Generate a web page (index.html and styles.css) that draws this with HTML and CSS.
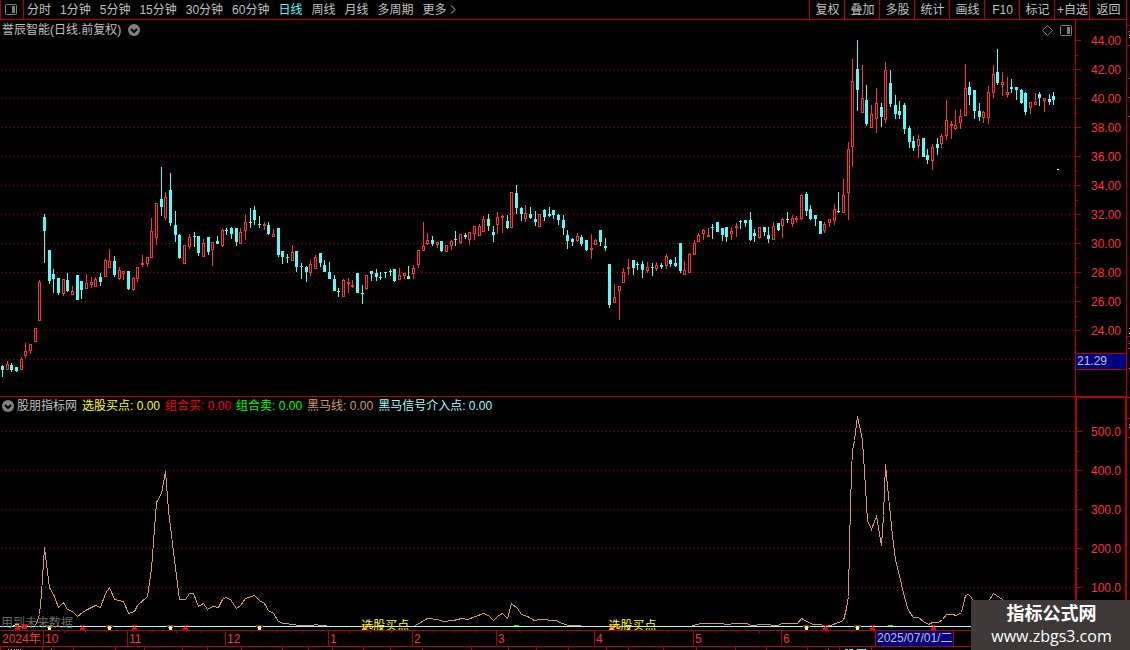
FILE: index.html
```html
<!DOCTYPE html>
<html lang="zh-CN">
<head>
  <meta charset="UTF-8">
  <meta name="viewport" content="width=device-width, initial-scale=1.0">
  <title>誉辰智能 - 日线</title>
  <link rel="stylesheet" href="styles.css">
</head>
<body>
  <div class="app">
    <div class="workspace">
      <header class="toolbar">
        <button type="button" class="panel-btn" aria-label="侧栏">
          <svg class="panel-icon" width="12" height="11" viewBox="0 0 12 11"><rect x="0.5" y="0.5" width="11" height="10" rx="1"/><rect class="fill" x="7" y="2" width="3" height="7"/></svg>
        </button>
        <nav class="periods">
          <button type="button">分时</button>
          <button type="button">1分钟</button>
          <button type="button">5分钟</button>
          <button type="button">15分钟</button>
          <button type="button">30分钟</button>
          <button type="button">60分钟</button>
          <button type="button" class="active">日线</button>
          <button type="button">周线</button>
          <button type="button">月线</button>
          <button type="button">多周期</button>
          <button type="button" class="more">更多<svg width="6" height="9" viewBox="0 0 6 9"><path d="M1 0.5L5 4.5L1 8.5"/></svg></button>
        </nav>
        <nav class="tools">
          <button type="button">复权</button>
          <button type="button">叠加</button>
          <button type="button">多股</button>
          <button type="button">统计</button>
          <button type="button">画线</button>
          <button type="button">F10</button>
          <button type="button">标记</button>
          <button type="button">+自选</button>
          <button type="button">返回</button>
        </nav>
      </header>

      <section class="pane price-pane">
        <div class="plot">
          <div class="pane-title">
            <span>誉辰智能(日线.前复权)</span>
            <button type="button" class="round-btn" aria-label="展开"><svg width="12" height="12" viewBox="0 0 12 12"><circle cx="6" cy="6" r="6"/><path d="M3 5L6 8L9 5"/></svg></button>
            <div class="pane-tools">
              <svg class="diamond" width="11" height="11" viewBox="0 0 11 11"><path d="M5.5 0.5L10.5 5.5L5.5 10.5L0.5 5.5Z"/></svg>
              <svg class="panel-icon" width="12" height="11" viewBox="0 0 12 11"><rect x="0.5" y="0.5" width="11" height="10" rx="1"/><rect class="fill" x="7" y="2" width="3" height="7"/></svg>
            </div>
          </div>
          <svg id="candles" class="candles" viewBox="0 40 1075 356" preserveAspectRatio="none"></svg>
        </div>
        <div class="axis">
          <span>44.00</span>
          <span>42.00</span>
          <span>40.00</span>
          <span>38.00</span>
          <span>36.00</span>
          <span>34.00</span>
          <span>32.00</span>
          <span>30.00</span>
          <span>28.00</span>
          <span>26.00</span>
          <span>24.00</span>
          <div class="price-tag">21.29</div>
        </div>
      </section>

      <section class="pane signal-pane">
        <div class="plot">
          <div class="pane-title legend">
            <button type="button" class="round-btn" aria-label="展开"><svg width="12" height="12" viewBox="0 0 12 12"><circle cx="6" cy="6" r="6"/><path d="M3 5L6 8L9 5"/></svg></button>
            <span>股朋指标网</span>
            <span class="yellow">选股买点: 0.00</span>
            <span class="red">组合买: 0.00</span>
            <span class="green">组合卖: 0.00</span>
            <span class="tan">黑马线: 0.00</span>
            <span class="aqua">黑马信号介入点: 0.00</span>
          </div>
          <svg id="signal" class="signal" viewBox="0 414 1075 216" preserveAspectRatio="none"></svg>
          <span class="note">用到未来数据</span>
          <span class="mark mark-jan">选股买点</span>
          <span class="mark mark-apr">选股买点</span>
        </div>
        <div class="axis">
          <span>500.0</span>
          <span>400.0</span>
          <span>300.0</span>
          <span>200.0</span>
          <span>100.0</span>
        </div>
      </section>

      <div class="dates">
        <span class="year">2024年</span>
        <span>10</span>
        <span>11</span>
        <span>12</span>
        <span>1</span>
        <span>2</span>
        <span>3</span>
        <span>4</span>
        <span>5</span>
        <span>6</span>
        <span class="current">2025/07/01/二</span>
        <span></span>
      </div>
      <svg id="footTicks" class="foot-ticks" viewBox="0 647 1126 3" preserveAspectRatio="none"></svg>
    </div>
    <svg id="edge" class="edge" viewBox="0 0 3 650" preserveAspectRatio="none"></svg>

    <div class="watermark">
      <strong>指标公式网</strong>
      <span>www.zbgs3.com</span>
    </div>
  </div>
  <script src="chart.js"></script>
</body>
</html>
```

FILE: styles.css
```css
* {
  box-sizing: border-box;
}

body {
  margin: 0;
  background: #000;
  color: #c0c0c0;
  font-family: "Liberation Sans", "Noto Sans CJK SC", sans-serif;
  font-size: 12px;
  line-height: 18px;
}

button {
  margin: 0;
  padding: 0;
  border: 0;
  background: none;
  color: inherit;
  font: inherit;
  white-space: nowrap;
  cursor: pointer;
}

svg {
  display: block;
}

.app {
  position: relative;
  display: flex;
  overflow: hidden;
}

.workspace {
  flex: 1;
  min-width: 0;
}

/* Toolbar */
.toolbar {
  display: flex;
  height: 20px;
  border-bottom: 1px solid #b40000;
}

.panel-btn {
  width: 24px;
  padding-left: 4px;
  border-left: 1px solid #b40000;
  border-right: 1px solid #b40000;
}

.panel-icon rect {
  fill: none;
  stroke: #808080;
}

.panel-icon .fill {
  fill: #808080;
  stroke: none;
}

.periods {
  display: flex;
  gap: 9px;
  padding-left: 3px;
}

.periods .active {
  color: #54fcfc;
}

.more {
  display: flex;
  align-items: center;
  gap: 3px;
}

.more path {
  fill: none;
  stroke: #c0c0c0;
}

.tools {
  display: flex;
  margin-left: auto;
}

.tools button {
  width: 35px;
  padding-left: 1px;
  border-left: 1px solid #b40000;
}

.tools button:last-child {
  width: 37px;
}

/* Panes */
.pane {
  display: flex;
}

.plot {
  position: relative;
  flex: 1;
  min-width: 0;
}

.pane-title {
  display: flex;
  align-items: center;
  gap: 5px;
  height: 20px;
  padding: 0 3px 0 2px;
  white-space: nowrap;
}

.price-pane .pane-title {
  gap: 7px;
}

.round-btn circle {
  fill: #808080;
}

.round-btn path {
  fill: none;
  stroke: #000;
  stroke-width: 2;
}

.pane-tools {
  display: flex;
  gap: 7px;
  margin-left: auto;
}

.diamond path {
  fill: none;
  stroke: #808080;
}

.candles {
  width: 100%;
  height: 356px;
}

.axis {
  width: 51px;
  padding-top: 6px;
  border-left: 1px solid #b40000;
  color: #ff3232;
  text-align: right;
}

.axis span {
  position: relative;
  display: block;
  height: 29px;
  padding-right: 5px;
  line-height: 31px;
}

.axis span::before,
.axis span::after {
  content: "";
  position: absolute;
  left: 0;
  height: 1px;
  background: #b40000;
}

.axis span::before {
  top: 14px;
  width: 5px;
}

.axis span::after {
  bottom: -1px;
  width: 2px;
}

.price-tag {
  height: 17px;
  margin-top: 8px;
  padding-left: 1px;
  border-top: 1px solid #b40000;
  border-bottom: 1px solid #b40000;
  background: #000080;
  color: #c0c0c0;
  line-height: 15px;
  text-align: left;
}

.signal-pane {
  border-top: 1px solid #b40000;
}

.legend {
  height: 17px;
}

.legend .round-btn {
  margin-right: -2px;
}

.yellow {
  color: #ffff00;
}

.red {
  color: #ff0000;
}

.green {
  color: #00ff00;
}

.tan {
  color: #d79a66;
}

.aqua {
  color: #9cffff;
}

.signal {
  width: 100%;
  height: 216px;
}

.signal-pane .axis {
  padding-top: 14px;
  border: 1px solid #b40000;
  border-left-width: 2px;
  border-bottom: 0;
}

.signal-pane .axis span {
  height: 39px;
  padding-right: 4px;
  line-height: 41px;
}

.signal-pane .axis span::before {
  top: 19px;
}

.note,
.mark {
  position: absolute;
  bottom: -1px;
  line-height: 16px;
}

.note {
  left: 1px;
  color: #6a6a6a;
}

.mark {
  bottom: -4px;
  color: #ffff00;
}

.mark-jan {
  left: 33.6%;
}

.mark-apr {
  left: 56.6%;
}

/* Date axis, quarter ticks inside each month */
.dates {
  display: grid;
  grid-template-columns: 43fr 84fr 98fr 103fr 84fr 84fr 98fr 99fr 88fr 94fr 78fr 173fr;
  height: 17px;
  border-top: 1px solid #b40000;
  border-bottom: 1px solid #b40000;
  background: #000;
  color: #ff3232;
  position: relative;
  line-height: 17px;
}

.dates span {
  height: 15px;
  padding-left: 1px;
  border-left: 1px solid #b40000;
  background: linear-gradient(to right, #b40000 1px, transparent 1px) border-box;
  background-size: 25% 2px;
  background-repeat: repeat-x;
  white-space: nowrap;
}

.dates .year {
  padding-left: 2px;
  border-left: 0;
  background: none;
}

.dates .current {
  background: #000080;
  color: #c0c0c0;
  line-height: 15px;
}

.foot-ticks {
  width: 100%;
  height: 3px;
}

.edge {
  width: 4px;
  height: 650px;
  border-left: 1px solid #b40000;
}

.watermark {
  position: absolute;
  right: 0;
  bottom: 0;
  display: flex;
  flex-direction: column;
  align-items: center;
  width: 159px;
  height: 50px;
  padding: 4px 0 0 2px;
  background: #3e3839;
  color: #fff;
}

.watermark strong {
  font-size: 18px;
  line-height: 21px;
}

.watermark span {
  font-family: "Open Sans", sans-serif;
  font-size: 16px;
  line-height: 22px;
}
```

FILE: chart.js
```js
// type (u = up, d = down), high, body top, body bottom, low
const bars = `
d365,366,370,377 u361,364,370,370 d363,365,370,372 d367,367,371,372 u357,359,370,370
u343,351,356,358 u344,344,351,354 u328,328,342,342 u280,282,321,321 d214,217,231,263
d250,250,281,284 d269,274,279,293 d278,278,293,295 u279,279,294,296 d273,280,291,292
u286,291,295,295 d275,275,300,300 d281,281,290,299 u274,283,289,289 u277,282,285,288
u277,279,287,287 d273,277,282,286 u259,260,277,277 u249,261,268,268 d256,261,275,277
u267,270,279,280 u271,271,274,280 d271,271,289,290 u277,278,290,291 u267,267,279,282
u255,263,265,267 u257,257,264,267 u218,231,258,258 u203,203,238,245 d167,199,207,216
u192,197,218,220 d173,190,223,226 d211,225,235,242 d234,235,258,259 u245,245,264,264
u234,237,247,249 d232,236,237,247 d236,236,253,256 u239,243,257,257 d237,237,252,255
u242,242,250,266 d236,241,244,244 u229,230,246,247 d228,230,231,235 d227,228,234,239
d228,228,242,246 u228,232,244,244 u215,222,231,240 d208,222,223,228 d206,210,220,225
d216,224,225,228 u222,224,226,230 d222,225,234,235 u229,234,237,237 d228,228,255,257
d251,251,257,264 d254,257,258,263 u245,252,261,261 d251,251,267,272 d263,266,267,279
d266,267,272,282 u260,264,273,276 u255,257,269,269 d253,253,263,267 d260,265,272,272
d262,272,279,279 d275,279,291,291 d288,291,292,297 u279,280,297,297 u278,282,284,293
u280,285,287,288 d273,273,293,293 d285,293,294,304 u275,275,289,290 d271,271,274,281
d269,273,277,281 d272,277,278,280 d272,272,273,278 d269,271,272,276 d269,269,281,282
u268,275,280,280 u273,273,276,279 d266,276,279,279 u265,268,274,279 u250,250,265,268
u222,246,251,251 u233,240,244,245 d236,240,244,246 u242,242,245,248 d241,241,251,252
u245,245,252,252 u240,241,246,250 d231,239,240,246 u234,234,243,244 d233,235,237,239
u232,232,240,245 u226,226,234,240 u224,226,236,236 u216,219,232,232 d214,219,226,231
d226,232,235,242 u212,217,225,234 u215,216,218,233 d215,221,228,229 u192,192,228,228
d185,193,208,214 d207,208,214,221 u205,213,219,222 d207,214,218,219 d211,219,222,226
u214,214,227,227 d209,210,217,221 d207,214,216,217 d210,210,215,219 d214,215,220,225
d215,220,228,235 d230,235,241,249 d238,239,242,246 u233,236,241,242 d235,237,244,246
d240,240,250,251 u234,248,250,259 u239,240,245,245 d230,230,242,246 d238,246,248,251
d264,264,305,308 u284,297,303,303 u286,286,291,320 u268,272,283,283 u259,267,269,275
d260,260,268,275 d262,264,265,270 d261,264,270,278 u262,267,271,273 d263,267,268,276
u262,265,269,271 d263,265,267,269 u254,256,266,269 d259,260,264,267 d257,263,266,267
d243,243,271,273 u261,270,275,275 u253,254,273,273 u240,243,255,255 u233,235,242,242
u229,230,234,240 u228,235,237,237 d224,227,228,239 d222,222,232,232 d228,228,235,241
d227,227,237,242 u227,231,234,240 u223,226,228,237 d220,221,222,229 d220,220,223,227
d212,220,240,241 d229,233,236,242 u227,227,238,239 d227,227,232,236 d227,235,239,243
u222,226,240,240 d223,223,230,231 u218,219,226,238 d212,219,220,223 u215,218,224,227
u216,218,220,223 u194,195,219,220 d192,194,211,216 d205,209,219,220 d215,215,219,226
d221,221,234,234 u222,224,231,233 u219,219,223,227 u204,209,221,225 d192,211,212,213
u179,195,213,213 u142,149,193,220 u59,81,147,167 d40,69,90,111 u65,98,113,113
d85,100,124,126 u105,114,128,128 u88,103,119,133 d103,107,117,127 u62,70,120,123
d70,83,104,107 d95,105,114,119 d101,111,115,119 d103,105,129,134 d126,128,142,148
d136,141,148,151 u135,139,146,158 d138,138,157,157 d149,155,160,164 u144,147,161,170
d138,144,148,155 u134,136,144,148 u100,120,136,140 u121,124,126,139 u110,125,129,130
u109,116,123,129 u64,88,116,116 d82,87,95,105 d90,90,111,119 d103,111,117,121
u111,112,118,123 u86,92,118,124 u65,74,93,98 d49,72,83,85 u72,82,85,96
u77,92,95,98 d79,87,89,93 d87,87,90,100 d89,90,103,104 d92,93,112,115
u102,102,108,114 u93,102,105,105 d92,94,98,106 u98,98,101,112 d94,99,102,105
d92,96,100,105`.trim().split(/\s+/);

const UP = '#ff3232';
const DOWN = '#54fcfc';
const LINE = '#b40000';

function rect(x, y, w, h, color) {
  return `<rect x="${x}" y="${y}" width="${w}" height="${h}" fill="${color}"/>`;
}

function grid(from, to, step) {
  let out = '';
  for (let y = from; y <= to; y += step) {
    out += `<path d="M1 ${y + 0.5}H1075" stroke="${LINE}" stroke-dasharray="1 3"/>`;
  }
  return out;
}

function draw(id, content) {
  document.getElementById(id).innerHTML = `<g shape-rendering="crispEdges">${content}</g>`;
}

// candles
let candles = grid(69, 359, 29);
bars.forEach((bar, i) => {
  const x = Math.floor(2.4 + i * 4.6735);
  const color = bar[0] === 'u' ? UP : DOWN;
  const [high, top, bottom, low] = bar.slice(1).split(',').map(Number);
  candles += rect(x, high, 1, low - high, color);
  candles += rect(x - 1, top, 3, bottom - top, color);
  if (bar[0] === 'u' && bottom - top > 2) {
    candles += rect(x, top + 1, 1, bottom - top - 2, '#000');
  }
});
candles += rect(1057, 169, 2, 1, '#fff');
draw('candles', candles);

// 黑马线
const lines = [
  '35,625 37,620 39,614 41,593 44,547 49,587 54,596 58,607 63,602 67,609 72,611 77,616 82,612 87,609 95,605 100,607 105,593 109,587 114,599 123,601 128,613 134,611 137,605 147,596 151,568 156,502 161,493 165,471 168,510 172,543 179,599 185,599 189,593 193,593 198,606 203,603 207,609 212,606 218,607 222,599 225,597 230,599 236,608 240,605 245,598 254,595 259,600 264,603 268,610 273,613 278,621 283,623 293,624 298,625 312,625 315,624 320,625 326,625',
  '415,625 427,618 437,619 443,621 453,620 461,618 467,619 475,616 483,613 488,615 493,620 497,616 502,613 507,618 511,603 517,608 521,614 527,616 534,620 540,619 555,620 562,623 568,625 580,625',
  '692,625 701,623 710,623 720,623 727,624 735,623 747,623 750,625 763,624 777,625 782,623 797,623 801,618 808,622 813,624 830,625 838,622 843,620 846,608 848,596 849,543 851,471 852,450 854,440 857,416 860,430 862,440 864,471 867,520 871,529 876,516 881,545 883,515 885,464 888,496 892,535 895,560 899,575 904,597 908,610 913,617 918,617 923,621 928,624 932,622 938,622 942,619 946,614 952,614 956,615 961,612 965,595 968,594 971,597 976,608 985,606 993,593 1002,599 1010,606'
];
let signal = grid(431, 587, 39);
lines.forEach(points => {
  signal += `<polyline points="${points}" transform="translate(0.5 0.5)" fill="none" stroke="#d79a66"/>`;
});
signal += rect(0, 626, 1075, 1, '#9cffff');

// cups
[49, 109, 170, 259, 806, 857].forEach(x => {
  signal += rect(x - 3, 625, 7, 2, '#6b3a1c') + rect(x - 2, 627, 5, 1, '#c89040');
  signal += rect(x - 1, 626, 3, 2, '#ffff00') + rect(x - 1, 628, 3, 1, '#fff') + rect(x - 1, 629, 3, 1, '#f0e0d0');
});

// buy arrows
[17, 82, 134, 185, 364, 611, 825, 872, 933].forEach(x => {
  signal += rect(x - 2, 625, 5, 1, '#c00000') + rect(x, 626, 1, 1, '#ff0000');
  signal += rect(x - 1, 627, 3, 1, '#ff0000') + rect(x - 2, 628, 5, 2, '#ff0000');
});
signal += rect(15, 624, 4, 1, '#ffff00') + rect(13, 625, 2, 1, '#ffff00');
signal += '<circle cx="24.5" cy="626.5" r="3" fill="#ff0000"/>';
signal += '<circle cx="617.5" cy="627" r="2" fill="#ff0000"/>';
signal += rect(514, 625, 5, 1, '#00ff00') + rect(888, 625, 5, 1, '#00ff00');
draw('signal', signal);

// strip under the dates
const ticks = [0, 42, 73, 115, 144, 182, 207, 241, 282, 308, 332, 363, 390, 422, 471, 508, 536, 568, 606, 628, 663, 696, 735, 766, 807, 839, 871];
let foot = ticks.map(x => rect(x, 647, 1, 3, LINE)).join('');
[8, 11, 14, 16, 18, 20, 51, 828].forEach(x => {
  foot += rect(x, 649, 1, 1, '#c0c0c0');
});
foot += rect(845, 649, 3, 1, DOWN) + rect(849, 649, 4, 1, DOWN) + rect(857, 649, 9, 1, DOWN);
draw('footTicks', foot);

// neighbour panel peeking in on the right
let edge = [25, 45, 336, 397, 418, 437].map(y => rect(0, y, 3, 1, LINE)).join('');
[31, 35, 37, 78, 97, 116, 328, 333, 343, 348, 368, 424, 427].forEach(y => {
  edge += rect(2, y, 1, 1, '#c0c0c0');
});
draw('edge', edge);
```
